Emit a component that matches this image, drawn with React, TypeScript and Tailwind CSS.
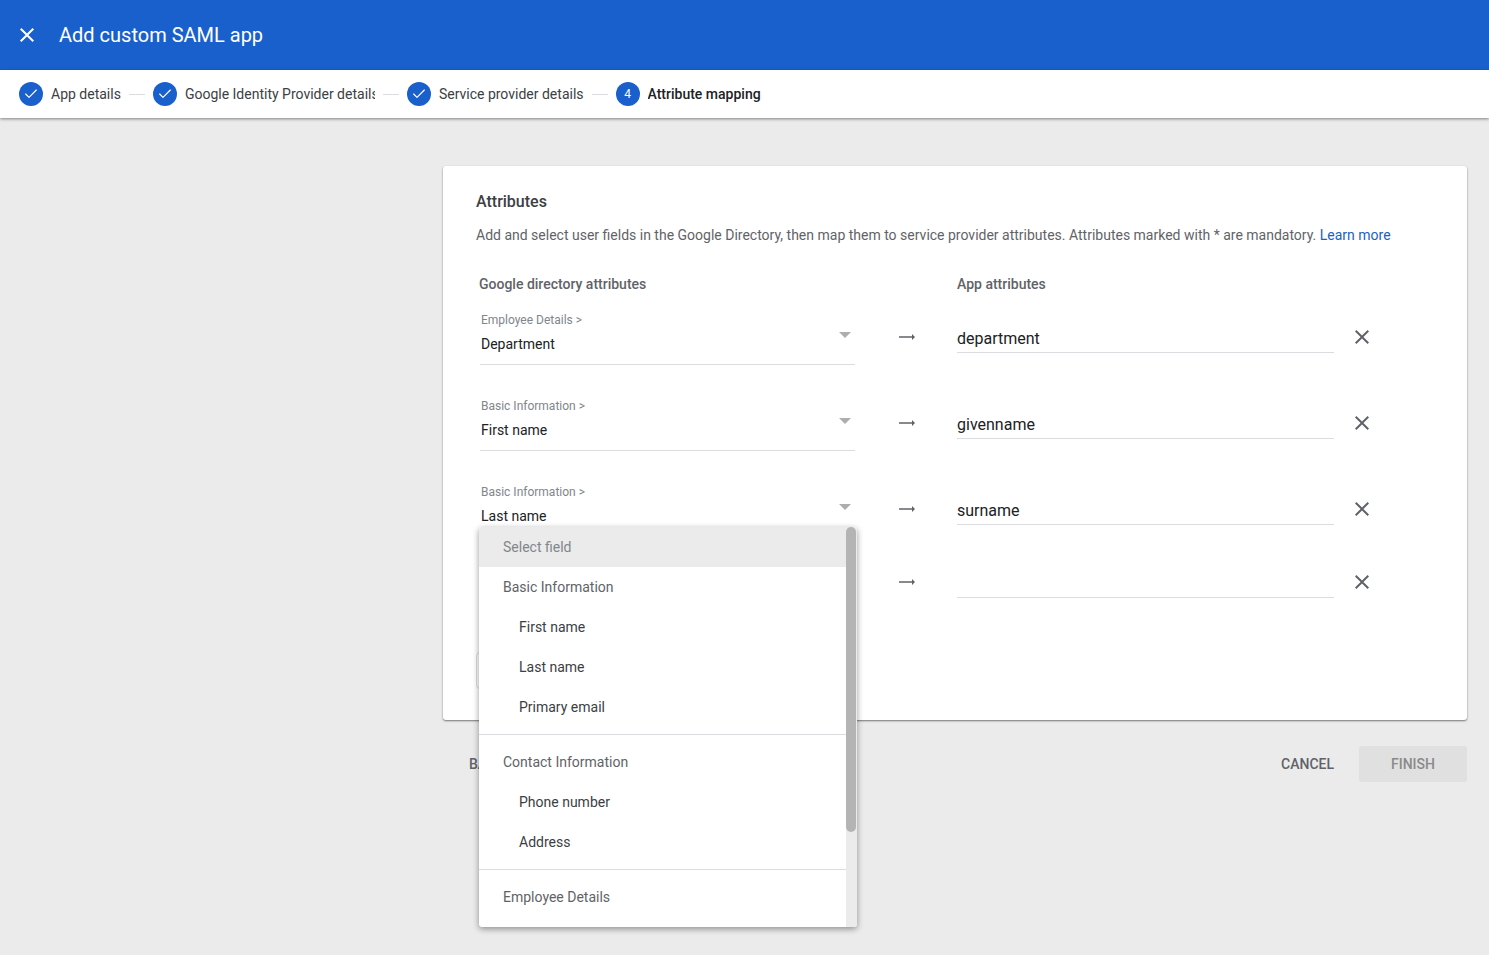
import { Check } from "lucide-react";

const steps = [
  { label: "App details", done: true },
  { label: "Google Identity Provider details", done: true, width: "w-[190px]" },
  { label: "Service provider details", done: true },
  { label: "Attribute mapping", done: false },
];

const rows = [
  { group: "Employee Details >", field: "Department", attr: "department", height: "h-[86px]" },
  { group: "Basic Information >", field: "First name", attr: "givenname", height: "h-[86px]" },
  { group: "Basic Information >", field: "Last name", attr: "surname", height: "h-[73px]", open: true },
  { group: "", field: "", attr: "", height: "h-[86px]" },
];

function CloseIcon({ className }: { className: string }) {
  return (
    <svg viewBox="0 0 24 24" className={className} fill="currentColor">
      <path d="M19 6.41 17.59 5 12 10.59 6.41 5 5 6.41 10.59 12 5 17.59 6.41 19 12 13.41 17.59 19 19 17.59 13.41 12z" />
    </svg>
  );
}

function ArrowIcon() {
  return (
    <svg viewBox="0 0 24 24" className="mt-[13px] ml-[40px] h-6 w-6 shrink-0 text-[#5f6368]" fill="currentColor">
      <path d="M17 11.2H4v1.6h13v2.2l3-3-3-3z" />
    </svg>
  );
}

function FieldMenu() {
  const itemClass = "flex h-10 items-center text-sm text-[#5f6368]";
  const childClass = "flex h-10 items-center pl-10 text-sm text-[#3c4043]";
  return (
    <div className="absolute top-[43px] left-[-1px] z-10 flex h-[400px] w-[378px] overflow-hidden rounded-[3px] bg-white shadow-[0_2px_6px_rgba(0,0,0,0.4)]">
      <div className="min-w-0 flex-1">
        <div className="flex h-10 items-center bg-[#ebebeb] pl-6 text-sm text-[#80868b]">Select field</div>
        <div className={`${itemClass} pl-6`}>Basic Information</div>
        <div className={childClass}>First name</div>
        <div className={childClass}>Last name</div>
        <div className={childClass}>Primary email</div>
        <div className="mt-[7px] mb-[7px] border-t border-[#dadce0]" />
        <div className={`${itemClass} pl-6`}>Contact Information</div>
        <div className={childClass}>Phone number</div>
        <div className={childClass}>Address</div>
        <div className="mt-[7px] mb-[7px] border-t border-[#dadce0]" />
        <div className={`${itemClass} pl-6`}>Employee Details</div>
      </div>
      <div className="w-[11px] shrink-0 bg-[#ebebeb]">
        <div className="h-[305px] w-[10px] rounded-[5px] bg-[#b4b4b4]" />
      </div>
    </div>
  );
}

export default function App() {
  return (
    <div className="flex h-[955px] flex-col overflow-hidden bg-[#ebebeb] font-['Roboto',sans-serif]">
      {/* Title bar */}
      <header className="flex h-[70px] shrink-0 items-center bg-[#1a60cc] pl-[15px] text-white">
        <CloseIcon className="h-6 w-6" />
        <h1 className="ml-5 text-xl">Add custom SAML app</h1>
      </header>

      {/* Stepper */}
      <nav className="z-[1] flex h-12 shrink-0 items-center bg-white pl-[19px] shadow-[0_1px_3px_rgba(0,0,0,0.45)]">
        {steps.map((step, i) => (
          <div key={step.label} className="flex items-center">
            {i > 0 && <div className="mx-2 h-px w-4 bg-[#dadce0]" />}
            <div className="flex h-6 w-6 shrink-0 items-center justify-center rounded-full bg-[#1a60cc] text-xs text-white">
              {step.done ? <Check size={16} strokeWidth={1.75} /> : 4}
            </div>
            <span
              className={`ml-2 overflow-hidden text-sm whitespace-nowrap text-[#3c4043] ${step.width ?? ""} ${
                step.done ? "" : "font-medium text-[#202124]"
              }`}
            >
              {step.label}
            </span>
          </div>
        ))}
      </nav>

      <main className="flex-1 pt-12 pr-[22px] pl-[443px]">
        <section className="h-[554px] rounded-[3px] bg-white px-[33px] pt-[26px] shadow-[0_1px_2px_rgba(0,0,0,0.5)]">
          <h2 className="text-base leading-5 font-medium text-[#3c4043]">Attributes</h2>
          <p className="mt-[13px] text-sm leading-5 whitespace-nowrap text-[#5f6368]">
            Add and select user fields in the Google Directory, then map them to service provider attributes. Attributes
            marked with * are mandatory. <span className="text-[#1a60cc]">Learn more</span>
          </p>

          <div className="mt-[29px] flex text-sm leading-5 font-medium text-[#5f6368]">
            <div className="ml-[3px] w-[478px]">Google directory attributes</div>
            <div>App attributes</div>
          </div>

          <div className="mt-[18px]">
            {rows.map((row, i) => (
              <div key={i} className={`flex items-start ${row.height}`}>
                <div className="relative ml-1 w-[375px] shrink-0">
                  {row.group && (
                    <div className="flex h-[53px] justify-between border-b border-[#dadce0] pl-px">
                      <div>
                        <div className="text-xs leading-4 text-[#80868b]">{row.group}</div>
                        <div className="mt-1.5 text-sm leading-5 text-[#202124]">{row.field}</div>
                      </div>
                      <svg viewBox="0 0 12 6" className="mt-5 mr-1 h-1.5 w-3 text-[#aeaeae]" fill="currentColor">
                        <path d="M0 0h12L6 6z" />
                      </svg>
                    </div>
                  )}
                  {row.open && <FieldMenu />}
                </div>
                <ArrowIcon />
                <div className="ml-[38px] flex h-[41px] w-[377px] shrink-0 items-end border-b border-[#dadce0] pb-[3px] text-base leading-5 text-[#202124]">
                  {row.attr}
                </div>
                <CloseIcon className="mt-[13px] ml-4 h-6 w-6 shrink-0 text-[#5f6368]" />
              </div>
            ))}
          </div>

          <div className="mt-[9px] h-[37px] w-[120px] rounded-[4px] border border-[#dadce0]" />
        </section>

        <footer className="mt-[26px] flex h-9 items-center">
          <span className="ml-[26px] text-sm font-medium text-[#5f6368]">BACK</span>
          <span className="mr-[25px] ml-auto text-sm font-medium text-[#5f6368]">CANCEL</span>
          <button className="h-9 w-[108px] rounded-[3px] bg-[#e0e0e0] text-sm font-medium text-[#8a8a8a]">FINISH</button>
        </footer>
      </main>
    </div>
  );
}
